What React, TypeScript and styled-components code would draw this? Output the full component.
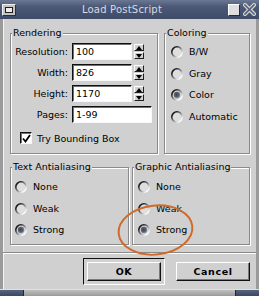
import * as React from 'react';
import styled, { createGlobalStyle } from 'styled-components';

const face = '#d0d0d0';
const font = '"DejaVu Sans", "Liberation Sans", sans-serif';

const GlobalStyle = createGlobalStyle`
  html, body {
    margin: 0;
    padding: 0;
    background: ${face};
  }
`;

const Window = styled.div`
  position: relative;
  width: 259px;
  height: 296px;
  display: flex;
  flex-direction: column;
  background: ${face};
  font-family: ${font};
  font-size: 9.5px;
  color: #000;
  overflow: hidden;
`;

const TitleBar = styled.div`
  height: 19px;
  flex: none;
  display: flex;
  align-items: center;
  padding: 0 3px 0 2px;
  box-sizing: border-box;
  background: linear-gradient(#6a7893, #4b5977 35%, #3f4c68);
`;

const MenuButton = styled.div`
  width: 14px;
  height: 12px;
  box-sizing: border-box;
  border: 1px solid;
  border-color: #f0f0f0 #303030 #303030 #f0f0f0;
  background: #c4c4c4;
  display: flex;
  align-items: center;
  justify-content: center;
  &::after {
    content: '';
    width: 6px;
    height: 4px;
    border: 1px solid #202020;
    background: #ececec;
  }
`;

const Title = styled.div`
  flex: 1;
  text-align: center;
  color: #d8dbe2;
  font-size: 10px;
  letter-spacing: 0.2px;
`;

const MaxButton = styled.div`
  width: 12px;
  height: 12px;
  box-sizing: border-box;
  border: 1px solid;
  border-color: #ffffff #2a2a2a #2a2a2a #ffffff;
  background: #dedede;
  margin-right: 3px;
`;

const Body = styled.div`
  flex: 1;
  display: flex;
  flex-direction: column;
  border-left: 3px solid #9a9a9a;
  border-right: 3px solid #9a9a9a;
  box-shadow: inset 1px 0 0 #f4f4f4;
`;

const Panel = styled.div`
  height: 234px;
  flex: none;
  box-sizing: border-box;
  padding: 8px 6px 0 7px;
  border-bottom: 1px solid #8a8a8a;
  box-shadow: 0 1px 0 #fff;
  display: flex;
  flex-direction: column;
  gap: 7px;
`;

const Row = styled.div<{ $h: number; $gap: number }>`
  height: ${p => p.$h}px;
  display: flex;
  gap: ${p => p.$gap}px;
`;

const Group = styled.fieldset<{ $w?: number }>`
  margin: 0;
  padding: 0;
  min-width: 0;
  box-sizing: border-box;
  ${p => (p.$w ? `width: ${p.$w}px; flex: none;` : 'flex: 1;')}
  border: 1px solid #8a8a8a;
  box-shadow: inset 1px 1px 0 #fff, 1px 1px 0 #fff;
`;

const Legend = styled.legend`
  padding: 0 1px;
  margin-left: 1px;
  line-height: 12px;
  background: ${face};
`;

const FormRows = styled.div`
  padding-top: 4px;
  display: flex;
  flex-direction: column;
  gap: 4px;
`;

const FormRow = styled.div`
  height: 17px;
  display: flex;
  align-items: flex-start;
`;

const Label = styled.label`
  width: 57px;
  margin-right: 4px;
  text-align: right;
  line-height: 17px;
`;

const Field = styled.input<{ $w: number }>`
  width: ${p => p.$w}px;
  height: 17px;
  box-sizing: border-box;
  margin: 0;
  padding: 0 0 0 3px;
  border: 1px solid;
  border-color: #101010 #f8f8f8 #f8f8f8 #101010;
  box-shadow: inset 1px 1px 0 #707070;
  background: #fff;
  font: 9.5px ${font};
  color: #000;
  outline: none;
`;

const Spin = styled.div`
  display: flex;
  flex-direction: column;
  gap: 1px;
  margin: 1px 0 0 2px;
`;

const SpinButton = styled.div`
  width: 10px;
  height: 7px;
  box-sizing: border-box;
  border: 1px solid;
  border-color: #fff #202020 #202020 #fff;
  background: ${face};
  display: flex;
  align-items: center;
  justify-content: center;
`;

const CheckRow = styled.div`
  margin: 9px 0 0 9px;
  height: 12px;
  display: flex;
  align-items: center;
  gap: 5px;
`;

const CheckBox = styled.span`
  width: 12px;
  height: 12px;
  box-sizing: border-box;
  border: 1px solid;
  border-color: #101010 #f8f8f8 #f8f8f8 #101010;
  box-shadow: inset 1px 1px 0 #707070;
  background: #fff;
  display: flex;
  align-items: center;
  justify-content: center;
`;

const RadioList = styled.div<{ $top: number; $left: number }>`
  padding: ${p => p.$top}px 0 0 ${p => p.$left}px;
  display: flex;
  flex-direction: column;
  gap: 9.5px;
`;

const RadioRow = styled.div`
  height: 12px;
  display: flex;
  align-items: center;
  gap: 6px;
  line-height: 12px;
`;

const ButtonBar = styled.div`
  flex: 1;
  display: flex;
  align-items: center;
  justify-content: flex-end;
  gap: 11px;
  padding: 1px 6px 0 0;
`;

const DefaultFrame = styled.div`
  padding: 3px;
  border: 1px solid;
  border-color: #101010 #fff #fff #101010;
`;

const PushButton = styled.button`
  width: 74px;
  height: 19px;
  margin: 0;
  padding: 0;
  box-sizing: border-box;
  border: 1px solid;
  border-color: #fff #101010 #101010 #fff;
  box-shadow: inset -1px -1px 0 #7a7a7a;
  background: ${face};
  font: bold 9.5px ${font};
  letter-spacing: 0.6px;
  color: #000;
`;

const BottomFrame = styled.div`
  height: 7px;
  flex: none;
  display: flex;
  border-top: 1px solid #e0e0e0;
  box-sizing: border-box;
`;

const FrameCorner = styled.div`
  width: 23px;
  background: linear-gradient(#56647f, #3c4862);
  border-right: 1px solid #1e2434;
  &:last-child {
    border-right: none;
    border-left: 1px solid #1e2434;
  }
`;

const FrameEdge = styled.div`
  flex: 1;
  background: linear-gradient(#c0c0c0, #9a9a9a);
`;

const Annotation = styled.svg`
  position: absolute;
  left: 0;
  top: 0;
  pointer-events: none;
`;

function Radio({ checked }: { checked?: boolean }) {
  const id = React.useId().replace(/:/g, '');
  return (
    <svg width="12" height="12" viewBox="0 0 12 12">
      <defs>
        <linearGradient id={`r${id}`} x1="0" y1="0" x2="1" y2="1">
          <stop offset="0.2" stopColor="#1a1a1a" />
          <stop offset="0.55" stopColor="#9a9a9a" />
          <stop offset="0.85" stopColor="#ffffff" />
        </linearGradient>
        <radialGradient id={`d${id}`} cx="0.45" cy="0.45" r="0.6">
          <stop offset="0" stopColor="#3c4150" />
          <stop offset="0.6" stopColor="#5d6474" />
          <stop offset="1" stopColor="#aab0bc" />
        </radialGradient>
      </defs>
      <circle cx="6" cy="6" r="5.2" fill="#dedede" stroke={`url(#r${id})`} strokeWidth="1.6" />
      {checked && <circle cx="6" cy="6" r="3.4" fill={`url(#d${id})`} />}
    </svg>
  );
}

function Arrow({ down }: { down?: boolean }) {
  return (
    <svg width="6" height="4" viewBox="0 0 6 4">
      <polygon points={down ? '0,0 6,0 3,4' : '0,4 6,4 3,0'} fill="#000" />
    </svg>
  );
}

function RadioGroup({ items, selected, top, left }: { items: string[]; selected: string; top: number; left: number }) {
  return (
    <RadioList $top={top} $left={left}>
      {items.map(item => (
        <RadioRow key={item}>
          <Radio checked={item === selected} />
          <span>{item}</span>
        </RadioRow>
      ))}
    </RadioList>
  );
}

const fields = [
  { label: 'Resolution:', value: '100', spin: true, w: 60 },
  { label: 'Width:', value: '826', spin: true, w: 60 },
  { label: 'Height:', value: '1170', spin: true, w: 60 },
  { label: 'Pages:', value: '1-99', spin: false, w: 80 },
];

export default function App() {
  return (
    <>
      <GlobalStyle />
      <Window>
        <TitleBar>
          <MenuButton />
          <Title>Load PostScript</Title>
          <MaxButton />
          <svg width="13" height="13" viewBox="0 0 13 13">
            <path d="M2 2 L11 11 M11 2 L2 11" stroke="#d4d4d4" strokeWidth="4" strokeLinecap="square" />
            <path d="M2 2 L11 11 M11 2 L2 11" stroke="#56627c" strokeWidth="1.6" strokeLinecap="square" />
          </svg>
        </TitleBar>
        <Body>
          <Panel>
            <Row $h={127} $gap={6}>
              <Group $w={148}>
                <Legend>Rendering</Legend>
                <FormRows>
                  {fields.map(f => (
                    <FormRow key={f.label}>
                      <Label>{f.label}</Label>
                      <Field $w={f.w} defaultValue={f.value} readOnly />
                      {f.spin && (
                        <Spin>
                          <SpinButton><Arrow /></SpinButton>
                          <SpinButton><Arrow down /></SpinButton>
                        </Spin>
                      )}
                    </FormRow>
                  ))}
                </FormRows>
                <CheckRow>
                  <CheckBox>
                    <svg width="9" height="9" viewBox="0 0 9 9">
                      <path d="M1 4.5 L3.5 7.5 L8 1" stroke="#000" strokeWidth="1.8" fill="none" />
                    </svg>
                  </CheckBox>
                  <span>Try Bounding Box</span>
                </CheckRow>
              </Group>
              <Group>
                <Legend>Coloring</Legend>
                <RadioGroup items={['B/W', 'Gray', 'Color', 'Automatic']} selected="Color" top={7} left={6} />
              </Group>
            </Row>
            <Row $h={84} $gap={3}>
              <Group $w={119}>
                <Legend>Text Antialiasing</Legend>
                <RadioGroup items={['None', 'Weak', 'Strong']} selected="Strong" top={8} left={4} />
              </Group>
              <Group>
                <Legend>Graphic Antialiasing</Legend>
                <RadioGroup items={['None', 'Weak', 'Strong']} selected="Strong" top={8} left={5} />
              </Group>
            </Row>
          </Panel>
          <ButtonBar>
            <DefaultFrame>
              <PushButton>OK</PushButton>
            </DefaultFrame>
            <PushButton>Cancel</PushButton>
          </ButtonBar>
        </Body>
        <BottomFrame>
          <FrameCorner />
          <FrameEdge />
          <FrameCorner />
        </BottomFrame>
        <Annotation width="259" height="296" viewBox="0 0 259 296">
          <ellipse cx="155.5" cy="230" rx="37" ry="24.5" fill="none" stroke="#cf6a2a" strokeWidth="2" transform="rotate(-6 155.5 230)" />
        </Annotation>
      </Window>
    </>
  );
}
